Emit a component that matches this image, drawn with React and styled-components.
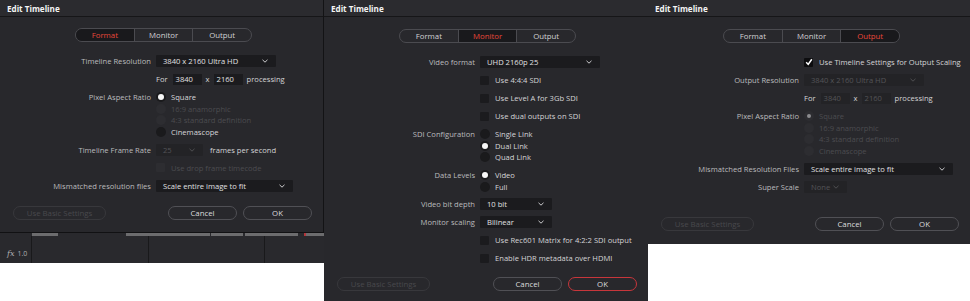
import React from 'react';
import styled, { createGlobalStyle } from 'styled-components';

const GlobalStyle = createGlobalStyle`
  html, body { margin: 0; padding: 0; background: #fff; }
  body { font-family: "Open Sans", "Liberation Sans", sans-serif; font-size: 7.6px; }
`;

const Collage = styled.main`
  display: flex;
  align-items: flex-start;
  width: 970px;
  height: 301px;
  overflow: hidden;
  background: #fff;
`;

const Shot = styled.div`
  flex: 0 0 ${(p) => p.$w}px;
  height: ${(p) => p.$h}px;
  display: flex;
  flex-direction: column;
  background: #28282c;
  overflow: hidden;
`;

const Dialog = styled.section`
  height: ${(p) => p.$h}px;
  flex-shrink: 0;
  display: flex;
  flex-direction: column;
  box-sizing: border-box;
  background: #28282c;
  border-right: ${(p) => (p.$edge ? '1px solid #131315' : 'none')};
`;

const TitleBar = styled.header`
  height: 17px;
  flex-shrink: 0;
  box-sizing: border-box;
  padding: 0 7px;
  display: flex;
  align-items: center;
  background: #2b2b2f;
  border-bottom: 1px solid #161618;
  color: #f4f4f4;
  font-size: 8.1px;
  font-weight: 700;
`;

const Tabs = styled.nav`
  display: flex;
  width: 177px;
  height: 14px;
  margin: ${(p) => p.$top}px 0 0 75px;
  box-sizing: border-box;
  border: 1px solid #4b4b50;
  border-radius: 7px;
  overflow: hidden;
`;

const Tab = styled.div`
  flex: 1;
  display: flex;
  align-items: center;
  justify-content: center;
  font-size: 7.8px;
  color: ${(p) => (p.$active ? '#e8473a' : '#d2d2d4')};
  background: ${(p) => (p.$active ? '#19191c' : 'transparent')};
  & + & { border-left: 1px solid #4b4b50; }
`;

const Form = styled.div`
  display: grid;
  grid-template-columns: 151px 1fr;
  column-gap: 5px;
  row-gap: 6px;
  margin-top: 13px;
`;

const Label = styled.span`
  grid-column: 1;
  justify-self: end;
  align-self: start;
  height: 12px;
  line-height: 12px;
  color: #bbbbbd;
  white-space: nowrap;
`;

const Field = styled.div`
  grid-column: 2;
  display: flex;
  align-items: center;
  gap: ${(p) => p.$gap ?? 5}px;
  min-height: 12px;
  color: ${(p) => (p.$disabled ? '#4c4c50' : '#d4d4d6')};
  white-space: nowrap;
`;

const Select = styled.div`
  width: ${(p) => p.$w}px;
  height: 12px;
  box-sizing: border-box;
  padding: 0 8px 0 7px;
  display: flex;
  align-items: center;
  justify-content: space-between;
  background: ${(p) => (p.$disabled ? '#232326' : '#1b1b1e')};
  color: ${(p) => (p.$disabled ? '#535357' : '#e0e0e2')};
  border-radius: 1px;
`;

const NumBox = styled.div`
  width: 29px;
  height: 11px;
  box-sizing: border-box;
  padding-left: 3px;
  display: flex;
  align-items: center;
  background: ${(p) => (p.$disabled ? '#232326' : '#1b1b1e')};
  color: ${(p) => (p.$disabled ? '#535357' : '#e0e0e2')};
`;

const RadioGroup = styled.div`
  grid-column: 2;
  display: flex;
  flex-direction: column;
`;

const Option = styled.div`
  height: 11.7px;
  display: flex;
  align-items: center;
  gap: 5px;
  color: ${(p) => (p.$disabled ? '#4c4c50' : '#d6d6d8')};
`;

const RadioDot = styled.span`
  width: 10px;
  height: 10px;
  border-radius: 50%;
  flex-shrink: 0;
  display: flex;
  align-items: center;
  justify-content: center;
  background: ${(p) => (p.$disabled ? '#2d2d31' : '#1a1a1c')};
  &::after {
    content: '';
    display: ${(p) => (p.$on ? 'block' : 'none')};
    width: ${(p) => (p.$disabled ? 4 : 6)}px;
    height: ${(p) => (p.$disabled ? 4 : 6)}px;
    border-radius: 50%;
    background: ${(p) => (p.$disabled ? '#8c8c8f' : '#f6f6f6')};
  }
`;

const Box = styled.span`
  width: 9px;
  height: 9px;
  flex-shrink: 0;
  border-radius: 1px;
  display: flex;
  align-items: center;
  justify-content: center;
  background: ${(p) => (p.$on ? '#0d0d0f' : p.$disabled ? '#2d2d31' : '#1b1b1e')};
`;

const Buttons = styled.div`
  display: flex;
  gap: 6px;
  margin-top: ${(p) => p.$top}px;
  padding: 0 11px 0 13px;
  & > :first-child { margin-right: auto; }
`;

const Button = styled.button`
  width: ${(p) => p.$w}px;
  height: 14px;
  padding: 0;
  box-sizing: border-box;
  border-radius: 7px;
  font: inherit;
  font-size: 7.8px;
  background: transparent;
  border: 1px solid ${(p) => (p.$primary ? '#c7363b' : p.disabled ? '#38383c' : '#505055')};
  color: ${(p) => (p.disabled ? '#48484c' : '#dcdcde')};
`;

const Strip = styled.div`
  height: 31px;
  flex-shrink: 0;
  display: flex;
  flex-direction: column;
  background: #29292d;
  border-top: 1px solid #111113;
`;

const ClipLane = styled.div`
  height: 3px;
  display: flex;
`;

const Clip = styled.span`
  width: ${(p) => p.$w}px;
  margin-left: ${(p) => p.$x}px;
  background: ${(p) => (p.$red ? 'linear-gradient(90deg,#b3353a 0 2px,#6c6c6e 2px)' : '#6c6c6e')};
`;

const Tracks = styled.div`
  flex: 1;
  display: grid;
  grid-template-columns: 31px 117px 116px 1fr;
  & > * + * { border-left: 1px solid #19191b; }
`;

const TrackHead = styled.div`
  display: flex;
  align-items: flex-end;
  gap: 3px;
  padding: 0 0 6px 7px;
  color: #aeaeb0;
  font-size: 7px;
  & i { font-family: "DejaVu Serif", serif; font-size: 8px; }
`;

const Chevron = () => (
  <svg width="6" height="4" viewBox="0 0 6 4">
    <path d="M0.5 0.8 L3 3.2 L5.5 0.8" fill="none" stroke="currentColor" strokeWidth="0.9" />
  </svg>
);

const Tick = () => (
  <svg width="8" height="8" viewBox="0 0 8 8">
    <path d="M1.2 4.3 L3.2 6.4 L6.8 1.2" fill="none" stroke="#fff" strokeWidth="1.5" />
  </svg>
);

const Drop = ({ w, value, disabled }) => (
  <Select $w={w} $disabled={disabled}>
    <span>{value}</span>
    <Chevron />
  </Select>
);

const Radios = ({ items, on, disabled }) => (
  <RadioGroup>
    {items.map((it, i) => {
      const off = disabled === true || (Array.isArray(disabled) && disabled.includes(i));
      return (
        <Option key={it} $disabled={off}>
          <RadioDot $on={i === on} $disabled={off} />
          {it}
        </Option>
      );
    })}
  </RadioGroup>
);

const Check = ({ children, on, disabled }) => (
  <Field $gap={6} $disabled={disabled}>
    <Box $on={on} $disabled={disabled}>{on && <Tick />}</Box>
    {children}
  </Field>
);

const Processing = ({ disabled }) => (
  <Field $gap={4}>
    <span style={{ marginRight: 1 }}>For</span>
    <NumBox $disabled={disabled}>3840</NumBox>
    <span>x</span>
    <NumBox $disabled={disabled}>2160</NumBox>
    <span>processing</span>
  </Field>
);

const TabBar = ({ active, top }) => (
  <Tabs $top={top}>
    {['Format', 'Monitor', 'Output'].map((t) => (
      <Tab key={t} $active={t === active}>{t}</Tab>
    ))}
  </Tabs>
);

const Footer = ({ top, okPrimary }) => (
  <Buttons $top={top}>
    <Button $w={93} disabled>Use Basic Settings</Button>
    <Button $w={69}>Cancel</Button>
    <Button $w={69} $primary={okPrimary}>OK</Button>
  </Buttons>
);

const aspect = ['Square', '16:9 anamorphic', '4:3 standard definition', 'Cinemascope'];

function FormatShot() {
  return (
    <Shot $w={324} $h={263}>
      <Dialog $h={232} $edge>
        <TitleBar>Edit Timeline</TitleBar>
        <TabBar active="Format" top={11} />
        <Form>
          <Label>Timeline Resolution</Label>
          <Field><Drop w={120} value="3840 x 2160 Ultra HD" /></Field>
          <Processing />
          <Label>Pixel Aspect Ratio</Label>
          <Radios items={aspect} on={0} disabled={[1, 2]} />
          <Label>Timeline Frame Rate</Label>
          <Field $gap={7}>
            <Drop w={47} value="25" disabled />
            <span>frames per second</span>
          </Field>
          <Check disabled>Use drop frame timecode</Check>
          <Label>Mismatched resolution files</Label>
          <Field><Drop w={137} value="Scale entire image to fit" /></Field>
        </Form>
        <Footer top={14} />
      </Dialog>
      <Strip>
        <ClipLane>
          <Clip $x={32} $w={26} />
          <Clip $x={68} $w={85} />
          <Clip $x={1} $w={32} />
          <Clip $x={2} $w={53} />
          <Clip $x={6} $w={20} $red />
        </ClipLane>
        <Tracks>
          <TrackHead><i>fx</i><span>1.0</span></TrackHead>
          <div />
          <div />
          <div />
        </Tracks>
      </Strip>
    </Shot>
  );
}

function MonitorShot() {
  return (
    <Shot $w={324} $h={301}>
      <Dialog $h={301}>
        <TitleBar>Edit Timeline</TitleBar>
        <TabBar active="Monitor" top={12} />
        <Form>
          <Label>Video format</Label>
          <Field><Drop w={120} value="UHD 2160p 25" /></Field>
          <Check>Use 4:4:4 SDI</Check>
          <Check>Use Level A for 3Gb SDI</Check>
          <Check>Use dual outputs on SDI</Check>
          <Label>SDI Configuration</Label>
          <Radios items={['Single Link', 'Dual Link', 'Quad Link']} on={1} />
          <Label>Data Levels</Label>
          <Radios items={['Video', 'Full']} on={0} />
          <Label>Video bit depth</Label>
          <Field><Drop w={72} value="10 bit" /></Field>
          <Label>Monitor scaling</Label>
          <Field><Drop w={72} value="Bilinear" /></Field>
          <Check>Use Rec601 Matrix for 4:2:2 SDI output</Check>
          <Check>Enable HDR metadata over HDMI</Check>
        </Form>
        <Footer top={13} okPrimary />
      </Dialog>
    </Shot>
  );
}

function OutputShot() {
  return (
    <Shot $w={322} $h={244}>
      <Dialog $h={244}>
        <TitleBar>Edit Timeline</TitleBar>
        <TabBar active="Output" top={12} />
        <Form>
          <Check on>Use Timeline Settings for Output Scaling</Check>
          <Label>Output Resolution</Label>
          <Field><Drop w={120} value="3840 x 2160 Ultra HD" disabled /></Field>
          <Processing disabled />
          <Label>Pixel Aspect Ratio</Label>
          <Radios items={aspect} on={0} disabled />
          <Label>Mismatched Resolution Files</Label>
          <Field><Drop w={149} value="Scale entire image to fit" /></Field>
          <Label>Super Scale</Label>
          <Field><Drop w={43} value="None" disabled /></Field>
        </Form>
        <Footer top={24} />
      </Dialog>
    </Shot>
  );
}

export default function App() {
  return (
    <>
      <GlobalStyle />
      <Collage>
        <FormatShot />
        <MonitorShot />
        <OutputShot />
      </Collage>
    </>
  );
}
